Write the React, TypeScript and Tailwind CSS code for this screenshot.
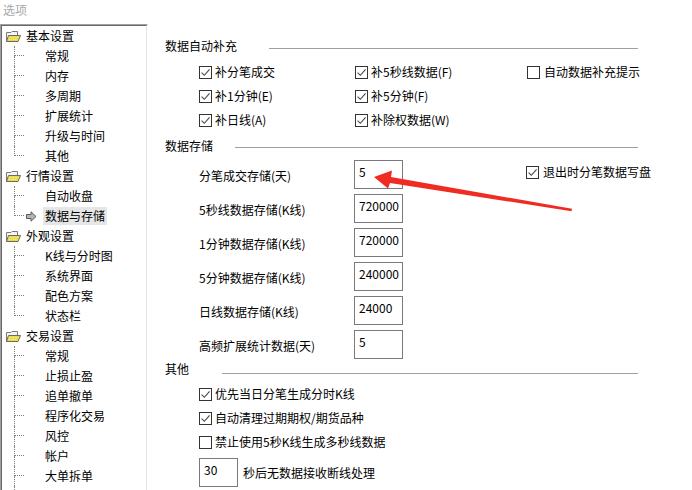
import React from "react";

type TreeGroup = { title: string; children: string[] };

const groups: TreeGroup[] = [
  { title: "基本设置", children: ["常规", "内存", "多周期", "扩展统计", "升级与时间", "其他"] },
  { title: "行情设置", children: ["自动收盘", "数据与存储"] },
  { title: "外观设置", children: ["K线与分时图", "系统界面", "配色方案", "状态栏"] },
  { title: "交易设置", children: ["常规", "止损止盈", "追单撤单", "程序化交易", "风控", "帐户", "大单拆单", "键盘快捷下单"] },
];

function FolderIcon() {
  return (
    <svg width="16" height="13" viewBox="0 0 16 13" className="shrink-0">
      <path d="M1.5 2.5 H6 L7 1.5 H12.5 V11.5 H1.5 Z" fill="#f4f4f4" stroke="#7a7a7a" strokeWidth="1" />
      <path d="M1.5 11.5 L3.5 5.5 H15.5 L13 11.5 Z" fill="#e8dc4a" stroke="#6a6a6a" strokeWidth="1" />
      <path d="M4.5 7.5 H13.5 M4 9.5 H12.5" stroke="#f6f090" strokeWidth="1" strokeDasharray="1 1" />
    </svg>
  );
}

function ArrowIcon() {
  return (
    <svg width="11" height="11" viewBox="0 0 11 11" className="shrink-0">
      <path d="M0.5 3.5 H5 V0.8 L10 5.5 L5 10.2 V7.5 H0.5 Z" fill="#b4b4b4" stroke="#5a5a5a" strokeWidth="1" />
    </svg>
  );
}

function Check({ checked }: { checked: boolean }) {
  return (
    <span className="w-[13px] h-[13px] border border-[#333333] bg-white flex items-center justify-center shrink-0">
      {checked && (
        <svg width="11" height="11" viewBox="0 0 11 11">
          <path d="M1.6 5.6 L4.3 8.3 L9.6 2.4" stroke="#444444" strokeWidth="1.1" fill="none" />
        </svg>
      )}
    </span>
  );
}

function CheckItem({ checked, label, gap = "gap-[3px]" }: { checked: boolean; label: string; gap?: string }) {
  return (
    <div className={`flex items-center ${gap} h-[24px] whitespace-nowrap`}>
      <Check checked={checked} />
      <span>{label}</span>
    </div>
  );
}

function SectionHeader({ title, lineMl, lineMt }: { title: string; lineMl: string; lineMt: string }) {
  return (
    <div className="flex items-center h-[20px]">
      <span className="whitespace-nowrap">{title}</span>
      <div className={`flex-1 h-px bg-[#a0a0a0] ${lineMl} ${lineMt}`} />
    </div>
  );
}

function Field({ value, w = "w-[49px]" }: { value: string; w?: string }) {
  return (
    <div className={`${w} h-[29px] border border-[#7a7a7a] pl-[4px] pt-[3px] shrink-0 bg-white`}>{value}</div>
  );
}

function Sidebar() {
  return (
    <div className="w-[148px] shrink-0 h-[470px] border-t border-l border-r border-t-[#a0a0a0] border-l-[#a0a0a0] border-r-white">
      <div className="h-full border-t border-l border-r border-t-[#696969] border-l-[#696969] border-r-[#e3e3e3] overflow-hidden">
        {groups.map((g) => (
          <div key={g.title}>
            <div className="h-[20px] flex items-center">
              <div className="ml-[3px]">
                <FolderIcon />
              </div>
              <span className="ml-[5px] whitespace-nowrap">{g.title}</span>
            </div>
            {g.children.map((c, i) => {
              const last = i === g.children.length - 1;
              const selected = g.title === "行情设置" && c === "数据与存储";
              return (
                <div key={c + i} className="h-[20px] flex items-stretch">
                  <div className="w-[12px] shrink-0" />
                  <div className="w-[10px] shrink-0 flex flex-col">
                    <div className="h-[10px] border-l border-b border-dotted border-[#808080]" />
                    <div className={`h-[10px] ${last ? "" : "border-l border-dotted border-[#808080]"}`} />
                  </div>
                  {selected ? (
                    <div className="flex items-center">
                      <div className="ml-[2px] mt-[1px]">
                        <ArrowIcon />
                      </div>
                      <span className="ml-[6px] px-[2px] h-[18px] flex items-center bg-[#e6e6e6] whitespace-nowrap">{c}</span>
                    </div>
                  ) : (
                    <div className="flex items-center ml-[21px] whitespace-nowrap">{c}</div>
                  )}
                </div>
              );
            })}
          </div>
        ))}
      </div>
    </div>
  );
}

const storageRows: [string, string][] = [
  ["分笔成交存储(天)", "5"],
  ["5秒线数据存储(K线)", "720000"],
  ["1分钟数据存储(K线)", "720000"],
  ["5分钟数据存储(K线)", "240000"],
  ["日线数据存储(K线)", "24000"],
  ["高频扩展统计数据(天)", "5"],
];

export default function App() {
  return (
    <div className="relative w-[692px] h-[490px] overflow-hidden bg-white text-black text-[12px] leading-[16px] font-['Noto_Sans_CJK_SC','Noto_Sans',sans-serif]">
      <div className="h-[24px] pl-[3px] pt-[2px] text-[#a8a8a8]">选项</div>
      <div className="flex">
        <Sidebar />
        <div className="flex-1 min-w-0 pl-[17px] pr-[54px]">
          <div className="mt-[12px]">
            <SectionHeader title="数据自动补充" lineMl="ml-[32px]" lineMt="mt-[4px]" />
          </div>
          <div className="mt-[4px] ml-[34px] grid grid-cols-[156px_172px_auto]">
            <CheckItem checked label="补分笔成交" />
            <CheckItem checked label="补5秒线数据(F)" />
            <CheckItem checked={false} label="自动数据补充提示" gap="gap-[4px]" />
            <CheckItem checked label="补1分钟(E)" />
            <CheckItem checked label="补5分钟(F)" />
            <div />
            <CheckItem checked label="补日线(A)" />
            <CheckItem checked label="补除权数据(W)" />
            <div />
          </div>
          <div className="mt-[4px]">
            <SectionHeader title="数据存储" lineMl="ml-[22px]" lineMt="mt-[2px]" />
          </div>
          <div className="mt-[4px] ml-[34px] flex flex-col gap-[5px]">
            {storageRows.map(([label, value], i) => (
              <div key={label} className="flex items-start h-[29px]">
                <div className="w-[155px] shrink-0 h-[29px] flex items-center pt-[3px] whitespace-nowrap">{label}</div>
                <Field value={value} />
                {i === 0 && (
                  <div className="ml-[123px] mt-[4px] flex items-center gap-[4px] h-[16px] whitespace-nowrap shrink-0">
                    <Check checked />
                    <span>退出时分笔数据写盘</span>
                  </div>
                )}
              </div>
            ))}
          </div>
          <SectionHeader title="其他" lineMl="ml-[33px]" lineMt="mt-[8px]" />
          <div className="mt-[3px] ml-[34px]">
            <CheckItem checked label="优先当日分笔生成分时K线" />
            <CheckItem checked label="自动清理过期期权/期货品种" />
            <CheckItem checked={false} label="禁止使用5秒K线生成多秒线数据" />
            <div className="mt-[4px] flex items-center">
              <Field value="30" w="w-[39px]" />
              <span className="ml-[5px] whitespace-nowrap">秒后无数据接收断线处理</span>
            </div>
          </div>
        </div>
      </div>
      <svg className="absolute inset-0 pointer-events-none" width="692" height="490" viewBox="0 0 692 490">
        <polygon
          points="374,177 392,170.5 391,177 572,208.8 571.5,211.2 390,183 388,188.5"
          fill="#ef2b22"
        />
      </svg>
    </div>
  );
}
